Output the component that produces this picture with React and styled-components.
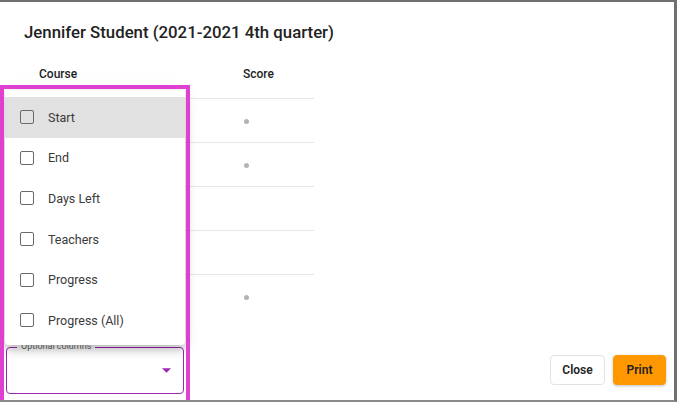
import React from "react";
import styled, { createGlobalStyle } from "styled-components";

const Global = createGlobalStyle`
  html, body { margin: 0; padding: 0; background: #fff; }
  body { font-family: Roboto, "Noto Sans", Arial, sans-serif; }
  * { box-sizing: border-box; }
`;

const Frame = styled.div`
  position: relative;
  width: 677px;
  height: 402px;
  background: #fff;
  border-top: 2px solid #6e6e6e;
  border-right: 3px solid #707070;
  border-bottom: 2px solid #8a8a8a;
  display: flex;
  flex-direction: column;
  overflow: hidden;
`;

const Title = styled.h2`
  margin: 0;
  padding: 19px 24px 0 24px;
  font-size: 16.8px;
  font-weight: 500;
  color: #222;
  line-height: 22px;
`;

const TableWrap = styled.div`
  margin-top: 21px;
  margin-left: 24px;
  width: 290px;
  flex: 1;
`;

const Table = styled.table`
  border-collapse: collapse;
  width: 100%;
  font-size: 12px;
`;

const Th = styled.th`
  text-align: left;
  font-weight: 500;
  color: #222;
  height: 34px;
  padding: 0 0 14px 15px;
  vertical-align: middle;
  border-bottom: 1px solid #e6e6e6;
`;

const Td = styled.td`
  height: 44px;
  border-bottom: 1px solid ${(p) => (p.$last ? "transparent" : "#e6e6e6")};
  padding: 0 0 0 15px;
  vertical-align: middle;
  color: #555;
`;

const Dot = styled.span`
  display: inline-block;
  width: 5px;
  height: 5px;
  border-radius: 50%;
  background: #b3b3b3;
  margin-left: 1px;
`;

const Footer = styled.div`
  display: flex;
  justify-content: space-between;
  align-items: flex-end;
  padding: 0 8px 6px 6px;
`;

const SelectField = styled.div`
  position: relative;
  width: 178px;
  height: 47px;
  border: 1.5px solid #9c27b0;
  border-radius: 4px;
`;

const SelectLabel = styled.span`
  position: absolute;
  top: -7px;
  left: 10px;
  padding: 0 4px;
  background: #fff;
  font-size: 9px;
  color: #666;
`;

const Arrow = styled.svg`
  position: absolute;
  right: 12px;
  top: 20px;
`;

const Buttons = styled.div`
  display: flex;
  gap: 8px;
  margin-bottom: 9px;
`;

const Button = styled.button`
  font-family: Roboto, Arial, sans-serif;
  font-size: 12px;
  font-weight: 600;
  color: #222;
  height: 30px;
  width: ${(p) => (p.$primary ? 53 : 55)}px;
  padding: 0;
  border-radius: 4px;
  border: 1px solid ${(p) => (p.$primary ? "#ff9800" : "#e2e2e2")};
  background: ${(p) => (p.$primary ? "#ff9800" : "#fff")};
  box-shadow: ${(p) => (p.$primary ? "0 1px 3px rgba(0,0,0,0.25)" : "none")};
`;

const Menu = styled.ul`
  position: absolute;
  left: 5px;
  top: 88px;
  width: 180px;
  margin: 0;
  padding: 7px 0 0 0;
  height: 255px;
  list-style: none;
  background: #fff;
  border-radius: 4px;
  box-shadow: 0 5px 8px rgba(0,0,0,0.2), 0 2px 16px rgba(0,0,0,0.12);
`;

const Item = styled.li`
  display: flex;
  align-items: center;
  height: 40.6px;
  padding-left: 15px;
  gap: 14px;
  font-size: 12.5px;
  color: #3a3a3a;
  background: ${(p) => (p.$active ? "#e1e1e1" : "transparent")};
`;

const Box = styled.span`
  width: 14px;
  height: 14px;
  border: 1.7px solid #6a6a6a;
  border-radius: 2px;
  flex: none;
`;

const Highlight = styled.div`
  position: absolute;
  left: 0;
  top: 83px;
  width: 190px;
  height: 320px;
  border: 4px solid #e040d0;
  pointer-events: none;
`;

const Peek = styled.span`
  position: absolute;
  left: 183px;
  top: 108px;
  width: 2px;
  height: 8px;
  background: #777;
`;

const options = ["Start", "End", "Days Left", "Teachers", "Progress", "Progress (All)"];
const scores = [true, true, false, false, true];

export default function App() {
  return (
    <>
      <Global />
      <Frame>
        <Title>Jennifer Student (2021-2021 4th quarter)</Title>
        <TableWrap>
          <Table>
            <thead>
              <tr>
                <Th>Course</Th>
                <Th>Score</Th>
              </tr>
            </thead>
            <tbody>
              {scores.map((s, i) => (
                <tr key={i}>
                  <Td style={{ width: 204 }} $last={i === scores.length - 1} />
                  <Td $last={i === scores.length - 1}>{s ? <Dot /> : null}</Td>
                </tr>
              ))}
            </tbody>
          </Table>
        </TableWrap>
        <Footer>
          <SelectField>
            <SelectLabel>Optional columns</SelectLabel>
            <Arrow width="9" height="5" viewBox="0 0 10 5">
              <path d="M0 0 L10 0 L5 5 Z" fill="#9c27b0" />
            </Arrow>
          </SelectField>
          <Buttons>
            <Button>Close</Button>
            <Button $primary>Print</Button>
          </Buttons>
        </Footer>
        <Peek />
        <Menu>
          {options.map((o, i) => (
            <Item key={o} $active={i === 0}>
              <Box />
              {o}
            </Item>
          ))}
        </Menu>
        <Highlight />
      </Frame>
    </>
  );
}
